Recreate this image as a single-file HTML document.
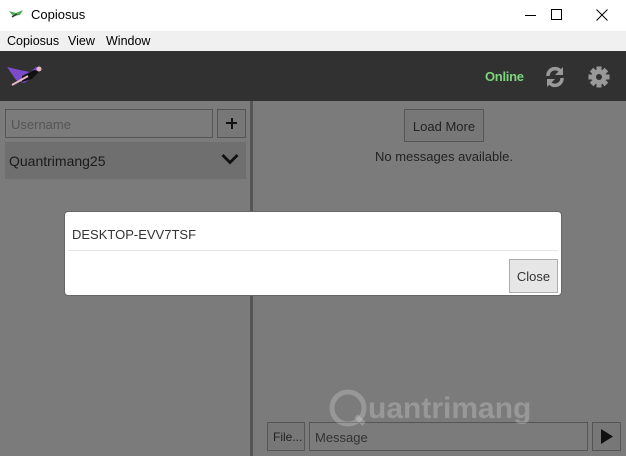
<!DOCTYPE html>
<html><head><style>
body{margin:0;width:626px;height:456px;overflow:hidden;font-family:"Liberation Sans",sans-serif;position:relative;background:#7b7b7b;font-size:13px}
div{position:absolute;box-sizing:border-box}
</style></head><body>
<div style="left:0;top:0;width:626px;height:31px;background:#fff"></div>
<svg style="position:absolute;left:9px;top:9px" width="16" height="12" viewBox="0 0 16 12"><path d="M0 2 L7 4 L14 1 L11 6 L4 7Z" fill="#4caf50"/><path d="M3 8 L8 5" stroke="#333" stroke-width="1.5"/></svg>
<div style="left:31px;top:7px;font-size:13px;color:#000">Copiosus</div>
<div style="left:525px;top:15px;width:11px;height:1px;background:#000"></div>
<div style="left:551px;top:9px;width:11px;height:11px;border:1px solid #000"></div>
<svg style="position:absolute;left:596px;top:9px" width="12" height="12"><path d="M0.5 0.5L11.5 11.5M11.5 0.5L0.5 11.5" stroke="#000"/></svg>
<div style="left:0;top:31px;width:626px;height:20px;background:#f0f0f0"></div>
<div style="left:7px;top:34px;font-size:12.5px;color:#000">Copiosus</div>
<div style="left:68px;top:34px;font-size:12.5px;color:#000">View</div>
<div style="left:106px;top:34px;font-size:12.5px;color:#000">Window</div>
<div style="left:0;top:51px;width:626px;height:50px;background:#313131"></div>
<svg style="position:absolute;left:6px;top:64px" width="38" height="24" viewBox="0 0 38 24"><path d="M1 3 L14 6 L24 8 L30 3 L36 5 L28 13 L18 19 L10 16Z" fill="#7b4bc9"/><path d="M16 12 L28 6 L34 7 L26 15 L16 18Z" fill="#111"/><path d="M6 21 L22 12" stroke="#e8b4c8" stroke-width="2"/><circle cx="33" cy="5" r="2.5" fill="#e8b4c8"/></svg>
<div style="left:485px;top:69px;font-weight:bold;color:#7ed47e;font-size:13px;letter-spacing:-0.3px">Online</div>
<svg style="position:absolute;left:544px;top:66px" width="22" height="22" viewBox="0 0 22 22"><path d="M4 10 A7 7 0 0 1 17 6" stroke="#999" stroke-width="3.5" fill="none"/><path d="M19 1 L19 9 L11 9Z" fill="#999"/><path d="M18 12 A7 7 0 0 1 5 16" stroke="#999" stroke-width="3.5" fill="none"/><path d="M3 21 L3 13 L11 13Z" fill="#999"/></svg>
<svg style="position:absolute;left:588px;top:66px" width="22" height="22" viewBox="0 0 22 22"><g fill="#999"><circle cx="11" cy="11" r="7.5"/><rect x="8.5" y="0.5" width="5" height="21"/><rect x="0.5" y="8.5" width="21" height="5"/><rect x="8.5" y="0.5" width="5" height="21" transform="rotate(45 11 11)"/><rect x="8.5" y="0.5" width="5" height="21" transform="rotate(-45 11 11)"/></g><circle cx="11" cy="11" r="3" fill="#313131"/></svg>
<div style="left:250px;top:101px;width:3px;height:355px;background:#555"></div>
<div style="left:5px;top:109px;width:208px;height:29px;border:1px solid #555;background:#7b7b7b;color:#555;padding:7px 5px;font-size:13px">Username</div>
<div style="left:217px;top:109px;width:29px;height:29px;border:1px solid #555;background:#777"></div>
<div style="left:226px;top:122px;width:11px;height:2px;background:#111"></div>
<div style="left:230.5px;top:117.5px;width:2px;height:11px;background:#111"></div>
<div style="left:5px;top:142px;width:241px;height:37px;background:#6f6f6f"></div>
<div style="left:9px;top:153px;color:#1a1a1a;font-size:14px">Quantrimang25</div>
<svg style="position:absolute;left:221px;top:153px" width="18" height="12"><path d="M1.5 2 L9 9.5 L16.5 2" stroke="#111" stroke-width="2.8" fill="none"/></svg>
<div style="left:404px;top:109px;width:80px;height:33px;border:1px solid #555;background:#777;color:#222;text-align:center;padding-top:9px;font-size:13px">Load More</div>
<div style="left:253px;top:149px;width:382px;text-align:center;color:#222;font-size:13px">No messages available.</div>
<div style="left:267px;top:422px;width:38px;height:29px;border:1px solid #555;background:#777;color:#222;padding:7px 0 0 5px;font-size:12px">File...</div>
<div style="left:309px;top:422px;width:279px;height:29px;border:1px solid #555;color:#333;padding:7px 5px;font-size:13px">Message</div>
<div style="left:592px;top:422px;width:29px;height:29px;border:1px solid #555;background:#777"></div>
<svg style="position:absolute;left:600px;top:429px" width="14" height="15"><path d="M1 0 L13 7.5 L1 15Z" fill="#111"/></svg>
<svg style="position:absolute;left:328px;top:388px" width="40" height="40"><circle cx="20" cy="20" r="16" stroke="rgba(255,255,255,0.22)" stroke-width="5" fill="none"/><path d="M28 28 L36 36" stroke="rgba(255,255,255,0.22)" stroke-width="5"/></svg>
<div style="left:368px;top:392px;font-size:30px;font-weight:bold;color:rgba(255,255,255,0.22)">uantrimang</div>
<div style="left:64px;top:211px;width:498px;height:85px;background:#fff;border-radius:4px;border:1px solid #666"></div>
<div style="left:72px;top:227px;color:#333;font-size:13px">DESKTOP-EVV7TSF</div>
<div style="left:68px;top:250px;width:490px;height:1px;background:#e5e5e5"></div>
<div style="left:509px;top:259px;width:49px;height:34px;border:1px solid #adadad;background:#e6e6e6;color:#333;text-align:center;padding-top:9px;font-size:13px">Close</div>
</body></html>
